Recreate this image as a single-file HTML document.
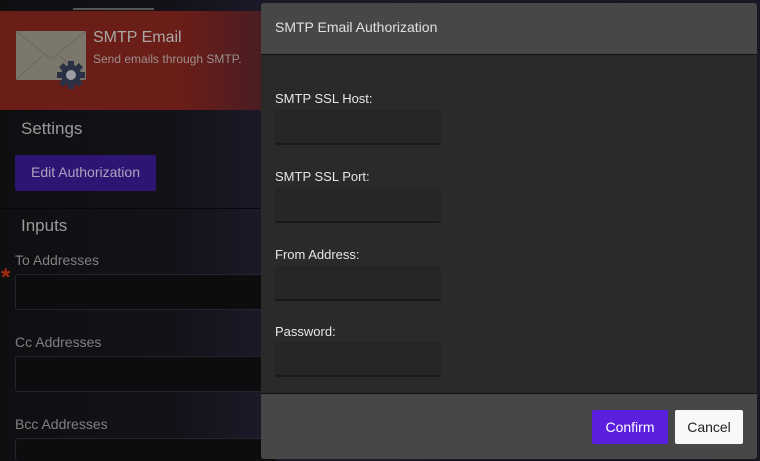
<!DOCTYPE html>
<html style="overflow:hidden;height:461px"><head><style>
body{margin:0;width:760px;height:461px;overflow:hidden;background:#111114;font-family:"Liberation Sans",sans-serif;position:relative}
.bg{position:absolute;left:0;top:0;width:760px;height:461px;background:linear-gradient(90deg,#0f0f12 0,#141219 180px,#1d1828 260px,#1a1622 760px)}
.hdr{position:absolute;left:0;top:11px;width:270px;height:99px;background:linear-gradient(90deg,#6b1d17 0,#6b1d17 180px,#4a1d22 262px)}
.t{position:absolute;color:#9a9a9a;white-space:nowrap}
.inp{position:absolute;left:15px;width:260px;height:34px;border:1px solid #26242c;border-radius:3px;background:#0d0d10}
.modal{position:absolute;left:261px;top:3px;width:496px;height:456px;background:#2a2a2a;border-radius:3px;overflow:hidden}
.mh{height:51px;background:#474747;border-bottom:1px solid #111}
.mf{position:absolute;left:0;bottom:0;width:496px;height:65px;background:#474747;border-top:1px solid #111}
.lab{position:absolute;left:14px;color:#e6e6e6;font-size:13px}
.mi{position:absolute;left:14px;width:166px;height:33px;background:#262626;border-bottom:2px solid #1a1a1a;border-radius:2px}
.btn{position:absolute;top:16px;height:34px;border-radius:2px;font-size:14px;line-height:34px;text-align:center}
</style></head><body>
<div class="bg"></div>
<div style="position:absolute;left:73px;top:8px;width:81px;height:2px;background:#555"></div>
<div class="hdr"></div>
<svg style="position:absolute;left:16px;top:31px" width="72" height="60">
<rect x="0" y="0" width="70" height="49" fill="#7b776d"/>
<path d="M0 0 L35 28 L70 0 M0 49 L27 24 M70 49 L43 24" stroke="#6b675e" fill="none"/>
<g transform="translate(55,44)"><circle r="10" fill="#2b3145"/><g fill="#2b3145"><rect x="-3" y="-14" width="6" height="28"/><rect x="-14" y="-3" width="28" height="6"/><rect x="-3" y="-14" width="6" height="28" transform="rotate(45)"/><rect x="-3" y="-14" width="6" height="28" transform="rotate(-45)"/></g><circle r="5" fill="#9a9ca0"/></g>
</svg>
<div class="t" style="left:93px;top:29px;font-size:16px;color:#a8a8a8">SMTP Email</div>
<div class="t" style="left:93px;top:52px;font-size:12px;color:#9a9090">Send emails through SMTP.</div>
<div class="t" style="left:21px;top:119px;font-size:17px">Settings</div>
<div style="position:absolute;left:15px;top:155px;width:141px;height:36px;background:#2e1573;border-radius:2px;color:#a9a3c0;font-size:14px;line-height:34px;text-align:center">Edit Authorization</div>
<div style="position:absolute;left:0;top:208px;width:270px;height:1px;background:#08080a"></div>
<div class="t" style="left:21px;top:216px;font-size:17px">Inputs</div>
<div class="t" style="left:15px;top:252px;font-size:14px;color:#808080">To Addresses</div>
<div class="t" style="left:1px;top:264px;font-size:24px;font-weight:bold;color:#a42a10">*</div>
<div class="inp" style="top:274px"></div>
<div class="t" style="left:15px;top:334px;font-size:14px;color:#808080">Cc Addresses</div>
<div class="inp" style="top:356px"></div>
<div class="t" style="left:15px;top:416px;font-size:14px;color:#808080">Bcc Addresses</div>
<div class="inp" style="top:438px;height:22px;border-bottom:none"></div>
<div class="modal">
<div class="mh"><div style="position:absolute;left:14px;top:16px;color:#e0e0e0;font-size:14px">SMTP Email Authorization</div></div>
<div class="lab" style="top:88px">SMTP SSL Host:</div><div class="mi" style="top:107px"></div>
<div class="lab" style="top:166px">SMTP SSL Port:</div><div class="mi" style="top:185px"></div>
<div class="lab" style="top:244px">From Address:</div><div class="mi" style="top:263px"></div>
<div class="lab" style="top:321px">Password:</div><div class="mi" style="top:339px"></div>
<div class="mf">
<div class="btn" style="left:331px;width:76px;background:#5b1fe0;color:#fff">Confirm</div>
<div class="btn" style="left:414px;width:68px;background:#f7f8fa;color:#222">Cancel</div>
</div>
</div>
</body></html>
